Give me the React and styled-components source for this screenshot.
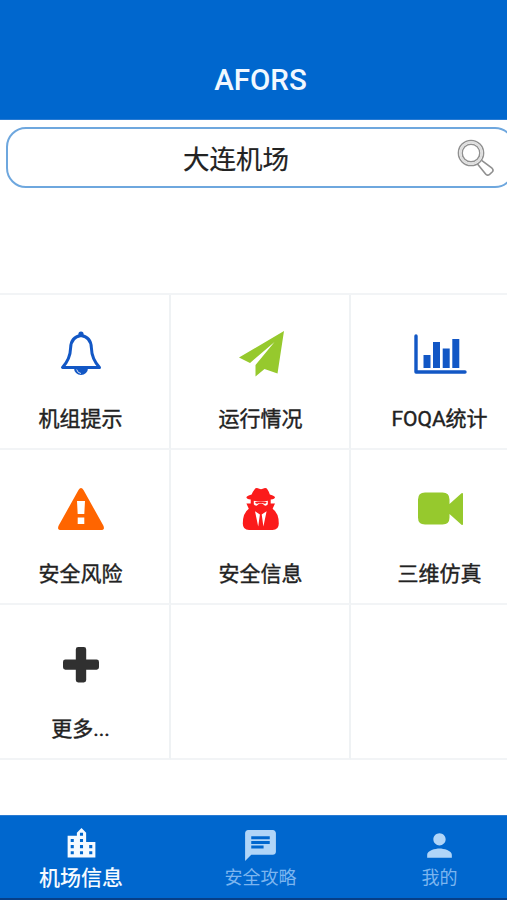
import React from 'react';
import styled, { createGlobalStyle } from 'styled-components';
import { MdChat, MdLocationCity, MdPerson } from 'react-icons/md';

const GlobalStyle = createGlobalStyle`
  * {
    box-sizing: border-box;
  }

  body {
    margin: 0;
    background: #fff;
    color: #222;
    font-family: Roboto, 'Noto Sans CJK SC', sans-serif;
    overflow: hidden;
  }
`;

const Screen = styled.main`
  display: flex;
  flex-direction: column;
  width: 507px;
  height: 900px;
  overflow: hidden;
`;

const Header = styled.header`
  flex: none;
  height: 120px;
  padding-top: 60px;
  padding-left: 14px;
  background: #0067ce;
  border-bottom: 1px solid #2a7bd2;
  color: #f1f8ff;
  text-align: center;
`;

const Title = styled.h1`
  margin: 0;
  font-size: 29.5px;
  font-weight: 500;
  line-height: 40px;
`;

const Search = styled.div`
  display: flex;
  flex: none;
  align-items: center;
  justify-content: space-between;
  width: 509px;
  height: 61px;
  margin: 7px 0 0 6px;
  padding: 0 18px 0 175px;
  border: 2px solid #6ea7de;
  border-radius: 20px;
`;

const Airport = styled.span`
  padding-top: 4px;
  font-size: 26.5px;
  line-height: 40px;
  -webkit-text-stroke: 0.2px;
`;

// The outer columns run past both edges of the screen
const Grid = styled.section`
  display: grid;
  flex: none;
  grid-template-columns: 180px 180px 178px;
  grid-auto-rows: 155px;
  width: 538px;
  margin: 105px 0 0 -9px;
  border-top: 2px solid #f2f4f6;
`;

const Cell = styled.div`
  display: flex;
  flex-direction: column;
  align-items: center;
  padding-left: 1px;
  border-right: 2px solid #eff2f4;
  border-bottom: 2px solid #f2f4f6;
`;

const Art = styled.svg`
  display: block;
  width: 60px;
  height: 60px;
  margin-top: 30px;
  color: ${({ $color }) => $color};
  fill: currentColor;
`;

const Label = styled.span`
  margin-top: 18px;
  font-size: 21px;
  line-height: 32px;
  white-space: nowrap;
  -webkit-text-stroke: 0.4px;
`;

const TabBar = styled.nav`
  display: grid;
  flex: none;
  grid-template-columns: 180px 179px 179px;
  width: 538px;
  height: 85px;
  margin: auto 0 0 -9px;
  background: #0067ce;
  border-top: 1px solid #2a7bd2;
  border-bottom: 2px solid #063f88;
`;

const Tab = styled.div`
  display: flex;
  flex-direction: column;
  align-items: center;
  padding-top: ${({ $active }) => ($active ? 9 : 11)}px;
  color: ${({ $active }) => ($active ? '#f5faff' : '#b0d5f8')};

  svg {
    display: block;
    width: 37px;
    height: 37px;
  }
`;

const TabLabel = styled.span`
  margin-top: ${({ $active }) => ($active ? 1 : -1)}px;
  color: ${({ $active }) => ($active ? '#f5faff' : '#7cb5ef')};
  font-size: ${({ $active }) => ($active ? 21 : 18)}px;
  font-weight: ${({ $active }) => ($active ? 500 : 400)};
  line-height: 30px;
`;

const SearchIcon = () => (
  <svg width="40" height="40" viewBox="0 0 40 40" fill="none" stroke="#909090">
    <circle cx="16" cy="15" r="12.6" strokeWidth="1.5" />
    <circle cx="16" cy="15" r="8.8" strokeWidth="1.5" />
    <circle cx="16" cy="15" r="10.7" stroke="#dedede" strokeWidth="2" />
    <path
      d="M22.5 26 30.6 36Q32.4 38.2 34.6 36.4L37.2 34Q39 32.2 37 30.2L26.6 22.3"
      strokeWidth="1.6"
    />
  </svg>
);

const icons = {
  bell: (
    <>
      <path
        d="M30 10.5C23 11.5 19.8 16 19.6 23C19.4 31.5 16 37.5 11.5 42.5H48.5C44 37.5 40.6 31.5 40.4 23C40.2 16 37 11.5 30 10.5Z"
        fill="none"
        stroke="currentColor"
        strokeWidth="3"
        strokeLinejoin="round"
      />
      <circle cx="30" cy="9" r="2.6" />
      <path d="M23 43h14a7 7 0 0 1-14 0Z" />
      <path d="M25.7 44.5q.8 3.5 4.3 4" fill="none" stroke="#fff" strokeWidth=".8" />
    </>
  ),
  plane: <path d="M53 6 46.5 48.5 33.5 44 24.5 51.5V40L43.5 17 19 38 8 32.5Z" />,
  chart: (
    <>
      <path
        d="M6 11v36h49"
        fill="none"
        stroke="currentColor"
        strokeWidth="3.4"
        strokeLinecap="round"
        strokeLinejoin="round"
      />
      <path d="M13.5 30h7v13h-7zM23 17h7v26h-7zM32.7 23.5h7V43h-7zM42.3 14h7v29h-7z" />
    </>
  ),
  warning: (
    <path
      fillRule="evenodd"
      d="M27.5 10Q30 6 32.5 10L52.3 45.5Q54.3 50 50 50H10Q5.7 50 7.7 45.5ZM26 21l.7 13h6.6L34 21ZM26.7 37.5v6.5h6.6v-6.5Z"
    />
  ),
  spy: (
    <>
      <path d="M23.5 9.5Q25 7 28.2 8.8Q30 9.7 31.8 8.8Q35 7 36.5 9.5Q38.2 12 38.8 14.5Q44 16.3 44 17.4Q44 18.6 39.7 19.6V23.5H44L41.6 28.7Q47.8 33 47.8 43.5Q47.8 50 41.5 50H18Q11.8 50 11.8 43.5Q11.8 33 17.8 28.7L15.4 23.5H19.7V19.6Q15.4 18.6 15.4 17.4Q15.4 16.3 20.6 14.5Q21.5 12 23.5 9.5Z" />
      <path
        d="M22.8 20.8Q30 22.6 36.8 20.8V24.2Q35.8 26 33.7 25.6L31.2 23.4H28.4L25.9 25.6Q23.8 26 22.8 24.2ZM24 31.2 28.9 34.5 27.2 46.5ZM35.6 31.2 30.7 34.5 32.4 46.5Z"
        fill="#fff"
      />
      <path d="M24 22h11.7l-.8 1.5q-2 .5-3-.5h-4q-1 1-3 .5Z" />
    </>
  ),
  video: (
    <path d="M15 12.5h17.5q7 0 7 7v4.5L51.5 13.3q1.5-1 1.5 1v29.4q0 2-1.5 1L39.5 34v3.5q0 7-7 7H15q-7 0-7-7v-18q0-7 7-7Z" />
  ),
  plus: (
    <path d="M27.2 12h5.6q2.4 0 2.4 2.4v10.2h10.4q2.4 0 2.4 2.4v5.3q0 2.4-2.4 2.4H35.2v10.4q0 2.4-2.4 2.4h-5.6q-2.4 0-2.4-2.4V34.7H14.4q-2.4 0-2.4-2.4V27q0-2.4 2.4-2.4h10.4V14.4q0-2.4 2.4-2.4Z" />
  ),
};

const cells = [
  { icon: 'bell', label: '机组提示', color: '#1257c5' },
  { icon: 'plane', label: '运行情况', color: '#96c92d' },
  { icon: 'chart', label: 'FOQA统计', color: '#1257c5' },
  { icon: 'warning', label: '安全风险', color: '#ff6500' },
  { icon: 'spy', label: '安全信息', color: '#fb1b1b' },
  { icon: 'video', label: '三维仿真', color: '#96c92d' },
  { icon: 'plus', label: '更多...', color: '#303030' },
  {},
  {},
];

const tabs = [
  { Icon: MdLocationCity, label: '机场信息', active: true },
  { Icon: MdChat, label: '安全攻略' },
  { Icon: MdPerson, label: '我的' },
];

export default function App() {
  return (
    <>
      <GlobalStyle />
      <Screen>
        <Header>
          <Title>AFORS</Title>
        </Header>
        <Search>
          <Airport>大连机场</Airport>
          <SearchIcon />
        </Search>
        <Grid>
          {cells.map(({ icon, label, color }, i) => (
            <Cell key={i}>
              {icon && (
                <>
                  <Art $color={color} viewBox="0 0 60 60">
                    {icons[icon]}
                  </Art>
                  <Label>{label}</Label>
                </>
              )}
            </Cell>
          ))}
        </Grid>
        <TabBar>
          {tabs.map(({ Icon, label, active }) => (
            <Tab key={label} $active={active}>
              <Icon />
              <TabLabel $active={active}>{label}</TabLabel>
            </Tab>
          ))}
        </TabBar>
      </Screen>
    </>
  );
}
